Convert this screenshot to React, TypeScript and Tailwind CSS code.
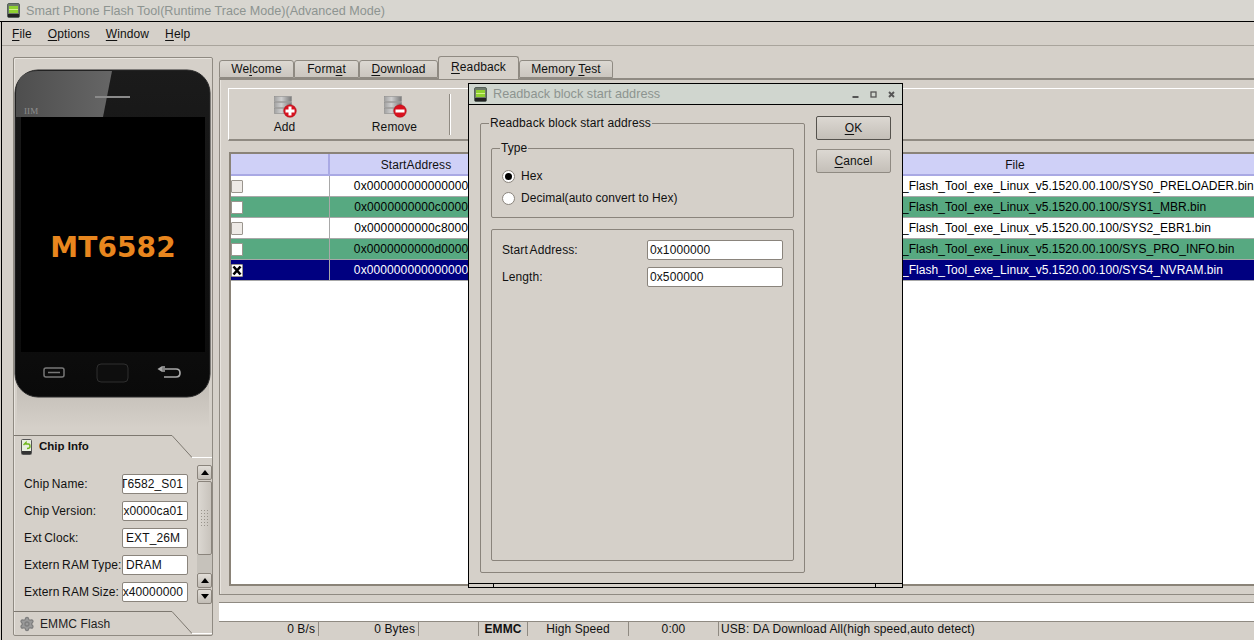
import React from "react";
import { Settings } from "lucide-react";

const U = ({ children }: { children: React.ReactNode }) => (
  <span className="underline underline-offset-2">{children}</span>
);

function AppIcon() {
  return (
    <svg width="13" height="15" viewBox="0 0 13 15" className="shrink-0">
      <rect x="0.5" y="0.5" width="12" height="14" rx="1.5" fill="#6e7a6a" stroke="#56605a" />
      <rect x="2" y="3" width="9" height="7" fill="#8fd12f" />
      <rect x="2" y="6" width="9" height="1" fill="#d4f08a" />
      <rect x="1" y="11" width="11" height="3" fill="#222" />
    </svg>
  );
}

function DbIcon({ minus }: { minus?: boolean }) {
  const id = minus ? "dbm" : "dbp";
  return (
    <svg width="24" height="24" viewBox="0 0 24 24">
      <defs>
        <linearGradient id={id} x1="0" x2="1" y1="0" y2="0">
          <stop offset="0" stopColor="#a2a2a2" />
          <stop offset="0.4" stopColor="#cfcfcf" />
          <stop offset="1" stopColor="#7a7a7a" />
        </linearGradient>
      </defs>
      {[1.5, 7.5, 13.5].map((y) => (
        <rect key={y} x="1.5" y={y} width="17" height="5" fill={`url(#${id})`} stroke="#8c8c8c" strokeWidth="0.6" />
      ))}
      <circle cx="17" cy="16" r="6.3" fill="#d9121f" stroke="#a10d14" strokeWidth="0.5" />
      {minus ? (
        <rect x="12.5" y="14.5" width="9" height="3" fill="#fff" />
      ) : (
        <path d="M15.5 11.5h3v3h3v3h-3v3h-3v-3h-3v-3h3z" fill="#fff" />
      )}
    </svg>
  );
}

function Phone() {
  return (
    <svg width="198" height="376" viewBox="0 0 198 376" className="block">
      <defs>
        <linearGradient id="refl" x1="0" x2="0" y1="0" y2="1">
          <stop offset="0" stopColor="#c2bdb6" />
          <stop offset="1" stopColor="#d5d0c9" />
        </linearGradient>
        <linearGradient id="gloss" x1="0" x2="1" y1="0" y2="0">
          <stop offset="0" stopColor="#4e4e4e" />
          <stop offset="1" stopColor="#666" />
        </linearGradient>
        <linearGradient id="body" x1="0" x2="0" y1="0" y2="1">
          <stop offset="0" stopColor="#1b1b1b" />
          <stop offset="1" stopColor="#0a0a0a" />
        </linearGradient>
      </defs>
      <rect x="3" y="325" width="192" height="45" fill="url(#refl)" />
      <rect x="1" y="12" width="195" height="327" rx="23" fill="url(#body)" stroke="#2a2a2a" />
      <path d="M2 59 V35 Q2 13 24 13 H98 L89 59 Z" fill="url(#gloss)" />
      <rect x="81" y="38" width="35" height="2" fill="#8a8a8a" />
      <text x="10" y="56" fontFamily="'Liberation Serif', serif" fontSize="9" fill="#8e8e8e">IIM</text>
      <rect x="7" y="59" width="184" height="235" fill="#000" />
      <text x="99" y="199" textAnchor="middle" fontFamily="'DejaVu Sans', sans-serif" fontWeight="700" fontSize="28" fill="#e8861e">MT6582</text>
      <rect x="30" y="310" width="20" height="9" rx="2" fill="none" stroke="#777" strokeWidth="1.5" />
      <path d="M34 314.5h12" stroke="#777" strokeWidth="1.5" />
      <rect x="83" y="306" width="31" height="18" rx="4" fill="#0e0e0e" stroke="#2e2e2e" />
      <path d="M151 309h-3l-3 2 3 2h3 M146 311h16q4 0 4 4t-4 4h-12" fill="none" stroke="#a8a8a8" strokeWidth="1.7" />
    </svg>
  );
}

function ScrollButton({ up, className = "" }: { up?: boolean; className?: string }) {
  return (
    <div className={`h-[15px] w-[15px] rounded-[2px] border border-[#8a847c] bg-gradient-to-b from-[#e2ded8] to-[#c2bdb6] flex items-center justify-center ${className}`}>
      <svg width="8" height="5" viewBox="0 0 8 5">
        <path d={up ? "M0 5 L4 0 L8 5Z" : "M0 0 L4 5 L8 0Z"} fill="#000" />
      </svg>
    </div>
  );
}

function ChipRow({ label, value, clip }: { label: string; value: string; clip?: boolean }) {
  return (
    <div className="flex items-center h-[20px]">
      <span className="w-[98px] whitespace-nowrap tracking-[0.15px] [word-spacing:-1px]">{label}</span>
      <div className={`w-[66px] h-[20px] bg-white border border-[#8a847c] rounded-[2px] flex items-center overflow-hidden whitespace-nowrap pl-[3px] pr-[4px] ${clip ? "justify-end" : "justify-start"}`}>
        <span className="shrink-0">{value}</span>
      </div>
    </div>
  );
}

function TabCorner({ y }: { y: number }) {
  return (
    <svg width="198" height={y + 1} viewBox={`0 0 198 ${y + 1}`} className="absolute left-0 top-0 pointer-events-none">
      <path d={`M0 0.5 H158 L178 ${y - 0.5}`} fill="none" stroke="#7d7870" />
      <path d={`M178 ${y - 0.5} H198`} fill="none" stroke="#fff" />
    </svg>
  );
}

function LeftColumn() {
  return (
    <div className="w-[200px] h-[579px] flex flex-col border border-[#8f8a82] rounded-[2px] shadow-[inset_1px_1px_0_#e8e4de]">
      <div className="h-[376px] shrink-0"><Phone /></div>
      <div className="relative flex-1 flex flex-col">
        <div className="relative h-[24px] shrink-0 flex items-center pl-[7px] gap-[7px] mt-[1px]">
          <TabCorner y={23} />
          <svg width="11" height="16" viewBox="0 0 11 16">
            <rect x="0.5" y="0.5" width="10" height="15" rx="1" fill="#e8eee0" stroke="#555" />
            <path d="M2.5 6 L5 3.5 V5 H7.5 Q9 5 9 7.5 Q9 9.5 6 9.5" fill="none" stroke="#6fb51c" strokeWidth="1.4" />
            <rect x="1" y="12" width="9" height="3" fill="#333" />
          </svg>
          <span className="font-bold text-[11.5px] tracking-normal">Chip Info</span>
        </div>
        <div className="flex flex-1 pl-[10px] pr-0">
          <div className="flex flex-col gap-[7px] pt-[15px] w-[172px]">
            <ChipRow label="Chip Name:" value="MT6582_S01" clip />
            <ChipRow label="Chip Version:" value="0x0000ca01" clip />
            <ChipRow label="Ext Clock:" value="EXT_26M" />
            <ChipRow label="Extern RAM Type:" value="DRAM" />
            <ChipRow label="Extern RAM Size:" value="0x40000000" clip />
          </div>
          <div className="flex flex-col pt-[6px] ml-[1px]">
            <ScrollButton up />
            <div className="h-[74px] w-[15px] mt-[1px] rounded-[2px] border border-[#8a847c] bg-gradient-to-r from-[#dcd8d2] to-[#c8c3bc] flex items-center justify-center">
              <div className="w-[9px] h-[18px] bg-[radial-gradient(#99948c_1px,transparent_1px)] bg-[length:3px_3px]" />
            </div>
            <div className="h-[18px] w-[15px] bg-[#c6c2bb]" />
            <ScrollButton up />
            <ScrollButton className="mt-[1px]" />
          </div>
        </div>
        <div className="relative h-[24px] shrink-0 flex items-center pl-[5px] pt-[1px] gap-[5px] text-[#222]">
          <TabCorner y={23} />
          <Settings size={16} fill="#9a9a9a" stroke="#7f7f7f" />
          <span>EMMC Flash</span>
        </div>
      </div>
    </div>
  );
}

function Tab({ children, w, active }: { children: React.ReactNode; w: string; active?: boolean }) {
  return (
    <div className={`${w} border border-[#8f8a82] rounded-t-[3px] flex items-center justify-center ${active ? "h-[23px] bg-[#d5d0c9] border-b-0 relative top-[1px] pb-[3px]" : "h-[18px] bg-gradient-to-b from-[#dcd8d2] to-[#cbc6bf]"}`}>
      <span className="whitespace-nowrap">{children}</span>
    </div>
  );
}

const rows = [
  { addr: "0x0000000000000000", file: "SYS0_PRELOADER.bin", bg: "bg-white text-black", box: "bg-[#eeeae6]" },
  { addr: "0x0000000000c00000", file: "SYS1_MBR.bin", bg: "bg-[#57a981] text-black", box: "bg-white" },
  { addr: "0x0000000000c80000", file: "SYS2_EBR1.bin", bg: "bg-white text-black", box: "bg-[#eeeae6]" },
  { addr: "0x0000000000d00000", file: "SYS_PRO_INFO.bin", bg: "bg-[#57a981] text-black", box: "bg-white" },
  { addr: "0x0000000000000000", file: "SYS4_NVRAM.bin", bg: "bg-[#000080] text-white", box: "bg-white", checked: true },
];

function Table() {
  return (
    <div className="ml-[9px] flex-1 border-2 border-r-0 border-[#8a8378] bg-white overflow-hidden">
      <div className="h-[22px] bg-[#cfd0f7] border-b-2 border-[#a9a9e4] flex text-center leading-[22px]">
        <div className="w-[99px] border-r-2 border-[#a9a9e4]" />
        <div className="w-[172px]">StartAddress</div>
        <div className="w-[274px]" />
        <div className="flex-1">File</div>
      </div>
      {rows.map((r, i) => (
        <div key={i} className={`h-[21px] flex items-center border-b border-[#a8a8a8] ${r.bg}`}>
          <div className="w-[99px] h-full border-r border-[#a8a8a8] flex items-center">
            <div className={`w-[12px] h-[13px] border border-[#9a958e] rounded-[1px] flex items-center justify-center ${r.box}`}>
              {r.checked && (
                <svg width="10" height="11" viewBox="0 0 10 11"><path d="M1.5 1.5 L8.5 9.5 M8.5 1.5 L1.5 9.5" stroke="#000" strokeWidth="2.6" /></svg>
              )}
            </div>
          </div>
          <div className="w-[172px] text-center whitespace-nowrap overflow-hidden pr-[3px] pb-[1px]">{r.addr}</div>
          <div className="w-[274px]" />
          <div className="flex-1 pl-[126px] whitespace-nowrap overflow-hidden pb-[1px] tracking-[0.04px]">_Flash_Tool_exe_Linux_v5.1520.00.100/{r.file}</div>
        </div>
      ))}
    </div>
  );
}

function RightColumn() {
  return (
    <div className="flex-1 h-[579px] flex flex-col min-w-0">
      <div className="h-[21px] flex items-end shrink-0 relative z-10">
        <Tab w="w-[75px]"><>We<U>l</U>come</></Tab>
        <Tab w="w-[65px]"><>Form<U>a</U>t</></Tab>
        <Tab w="w-[79px]"><><U>D</U>ownload</></Tab>
        <Tab w="w-[81px]" active><><U>R</U>eadback</></Tab>
        <Tab w="w-[94px]"><>Memory <U>T</U>est</></Tab>
      </div>
      <div className="h-[517px] shrink-0 border-t-2 border-[#8f8a82] border-l border-b flex flex-col pt-[8px] pb-[8px] shadow-[inset_1px_0_0_#e8e4de]">
        <div className="ml-[8px] h-[53px] shrink-0 border-l border-t border-white border-b-2 border-b-[#8f8a82] flex items-start">
          <div className="w-[111px] flex flex-col items-center pt-[6px] leading-[16px]">
            <DbIcon />
            <span>Add</span>
          </div>
          <div className="w-[109px] flex flex-col items-center pt-[6px] leading-[16px]">
            <DbIcon minus />
            <span>Remove</span>
          </div>
          <div className="h-[41px] w-[2px] self-center bg-white border-l border-[#8f8a82]" />
        </div>
        <div className="h-[11px] shrink-0" />
        <Table />
      </div>
      <div className="h-[7px] shrink-0" />
      <div className="h-[19px] shrink-0 bg-white border-t border-[#8f8a82]" />
      <div className="h-[15px] shrink-0 border-t border-[#8f8a82] flex leading-[14px] whitespace-nowrap">
        <div className="w-[100px] text-right pr-[3px] border-r border-[#8f8a82]">0 B/s</div>
        <div className="w-[100px] text-right pr-[3px] border-r border-[#8f8a82]">0 Bytes</div>
        <div className="w-[60px] border-r border-[#8f8a82]" />
        <div className="w-[49px] text-center font-bold border-r border-[#8f8a82]">EMMC</div>
        <div className="w-[101px] text-center border-r border-[#8f8a82]">High Speed</div>
        <div className="w-[90px] text-center border-r border-[#8f8a82]">0:00</div>
        <div className="flex-1 pl-[2px]">USB: DA Download All(high speed,auto detect)</div>
      </div>
    </div>
  );
}

function GroupBox({ title, className, children }: { title: string; className: string; children?: React.ReactNode }) {
  return (
    <div className={`relative border border-[#8a847c] rounded-[2px] ${className}`}>
      <span className="absolute left-[8px] -top-[8px] bg-[#d5d0c9] px-[1px] leading-[14px] whitespace-nowrap">{title}</span>
      {children}
    </div>
  );
}

function Radio({ on }: { on?: boolean }) {
  return (
    <div className="w-[13px] h-[13px] rounded-full border border-[#8a847c] bg-white flex items-center justify-center shrink-0">
      {on && <div className="w-[7px] h-[7px] rounded-full bg-black" />}
    </div>
  );
}

function WinBtns() {
  return (
    <div className="flex items-center gap-[9px] mr-[6px]">
      <svg width="9" height="9" viewBox="0 0 9 9"><rect x="1.5" y="6" width="6" height="2" fill="#555" /></svg>
      <svg width="9" height="9" viewBox="0 0 9 9"><rect x="2" y="2" width="5" height="5" fill="none" stroke="#555" strokeWidth="1.3" /></svg>
      <svg width="9" height="9" viewBox="0 0 9 9"><path d="M2 2 L7 7 M7 2 L2 7" stroke="#555" strokeWidth="1.9" /></svg>
    </div>
  );
}

function Dialog() {
  return (
    <div className="absolute left-[468px] top-[83px] w-[435px] h-[505px] border-[1.5px] border-black bg-[#d5d0c9] flex flex-col z-20">
      <div className="h-[20px] shrink-0 bg-[#d0d6cf] flex items-center pl-[5px] gap-[6px] border-b border-black box-content">
        <AppIcon />
        <span className="text-[12.7px] tracking-normal pt-[1px] text-[#8d9490] flex-1 whitespace-nowrap">Readback block start address</span>
        <WinBtns />
      </div>
      <div className="flex-1 flex min-h-0 pl-[11px]">
        <GroupBox title="Readback block start address" className="w-[325px] h-[450px] mt-[18px] px-[10px] pt-[24px]">
          <GroupBox title="Type" className="h-[70px] pt-[17px] pl-[10px] tracking-[0.04px]">
            <div className="flex items-center gap-[6px] h-[20px]"><Radio on /><span>Hex</span></div>
            <div className="flex items-center gap-[6px] h-[20px] mt-[2px]"><Radio /><span>Decimal(auto convert to Hex)</span></div>
          </GroupBox>
          <div className="mt-[11px] h-[332px] border border-[#8a847c] rounded-[2px] pt-[10px] px-[10px] flex flex-col gap-[7px]">
            {[["Start Address:", "0x1000000"], ["Length:", "0x500000"]].map(([l, v]) => (
              <div key={l} className="flex items-center h-[20px]">
                <span className="w-[145px] [word-spacing:-1px]">{l}</span>
                <div className="w-[136px] h-[20px] bg-white border border-[#8a847c] rounded-[2px] pl-[2px] flex items-center">{v}</div>
              </div>
            ))}
          </div>
        </GroupBox>
        <div className="ml-[11px] pt-[11px] flex flex-col gap-[9px]">
          <button className="w-[75px] h-[24px] border border-[#55524d] rounded-[2px] bg-gradient-to-b from-[#dcd8d2] to-[#c4bfb8]"><U>O</U>K</button>
          <button className="w-[75px] h-[24px] border border-[#8f8a82] rounded-[2px] bg-gradient-to-b from-[#dcd8d2] to-[#c4bfb8]"><U>C</U>ancel</button>
        </div>
      </div>
      <div className="h-[4px] shrink-0 border-t border-black flex">
        <div className="w-[25px] border-r border-black" />
        <div className="w-[382px] border-r border-black" />
      </div>
    </div>
  );
}

export default function App() {
  return (
    <div className="relative w-[1254px] h-[640px] overflow-hidden bg-[#d5d0c9] text-[12px] tracking-[0.1px] text-[#111] font-['Liberation_Sans',sans-serif] flex flex-col">
      <div className="h-[22px] shrink-0 border-b border-black bg-[#d8d6d0] flex items-center pl-[7px] gap-[6px]">
        <AppIcon />
        <span className="text-[12.6px] tracking-normal pt-[1px] text-[#8d9490] whitespace-nowrap">Smart Phone Flash Tool(Runtime Trace Mode)(Advanced Mode)</span>
      </div>
      <div className="flex-1 min-h-0 ml-[1px] border-l border-black flex flex-col">
        <div className="h-[24px] shrink-0 border-b border-[#a9a49c] flex items-center pl-[10px] gap-[16px]">
          <span><U>F</U>ile</span>
          <span><U>O</U>ptions</span>
          <span><U>W</U>indow</span>
          <span><U>H</U>elp</span>
        </div>
        <div className="flex pl-[11px] pt-[11px] gap-[6px]">
          <LeftColumn />
          <RightColumn />
        </div>
      </div>
      <Dialog />
    </div>
  );
}
